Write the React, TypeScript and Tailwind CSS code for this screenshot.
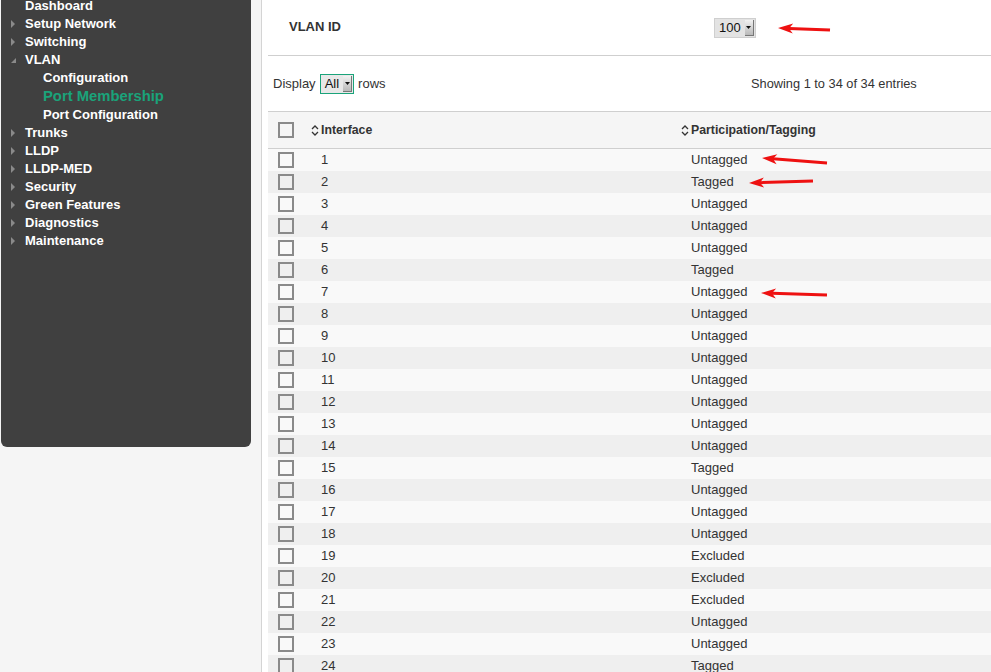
import React from 'react'

const menu = [
  { label: 'Dashboard', arrow: false },
  { label: 'Setup Network', arrow: true },
  { label: 'Switching', arrow: true },
  { label: 'VLAN', open: true },
]
const subMenu = ['Configuration', 'Port Membership', 'Port Configuration']
const menuRest = ['Trunks', 'LLDP', 'LLDP-MED', 'Security', 'Green Features', 'Diagnostics', 'Maintenance']

const tagging: Record<number, string> = { 2: 'Tagged', 6: 'Tagged', 15: 'Tagged', 19: 'Excluded', 20: 'Excluded', 21: 'Excluded', 24: 'Tagged' }
const rows = Array.from({ length: 34 }, (_, i) => ({ port: i + 1, mode: tagging[i + 1] ?? 'Untagged' }))

const arrows = [
  { tip: [778, 28], tail: [830, 30] },
  { tip: [762, 158], tail: [827, 163] },
  { tip: [749, 183], tail: [813, 181] },
  { tip: [761, 293], tail: [827, 295] },
]

function Triangle() {
  return (
    <svg width="6" height="8" viewBox="0 0 6 8" className="mr-[9px]">
      <path d="M1 0 L5 4 L1 8 Z" fill="#8a8a8a" />
    </svg>
  )
}

function SortIcon() {
  return (
    <svg width="8" height="11" viewBox="0 0 8 11" className="mr-[2px]">
      <path d="M1 4 L4 1 L7 4 M1 7 L4 10 L7 7" stroke="#333" strokeWidth="1.3" fill="none" />
    </svg>
  )
}

function Checkbox() {
  return <div className="w-[16px] h-[16px] border-2 border-[#8a8a8a] bg-transparent" />
}

function Select({ value, focus }: { value: string; focus?: boolean }) {
  return (
    <div
      className={`flex items-center h-[20px] pl-[4px] pr-[1px] ${
        focus ? 'border border-[#1aa37a] bg-[#e8e8e8]' : 'border border-[#cfcfcf] bg-[#e3e3e3]'
      }`}
    >
      <span className="text-[13px] text-[#111] mr-[4px]">{value}</span>
      <div className="w-[9px] h-[16px] bg-gradient-to-b from-[#f2f2f2] to-[#b9b9b9] border-r border-b border-[#777] flex items-center justify-center">
        <svg width="5" height="3" viewBox="0 0 5 3">
          <path d="M0 0 L5 0 L2.5 3 Z" fill="#111" />
        </svg>
      </div>
    </div>
  )
}

export default function App() {
  return (
    <div className="relative flex w-[991px] h-[672px] overflow-hidden bg-[#f5f5f5] font-['Liberation_Sans',Arial,sans-serif] text-[#333]">
      {/* Sidebar */}
      <div className="w-[261px] shrink-0 pl-[1px]">
        <div className="w-[250px] h-[447px] bg-[#404040] rounded-b-[6px] overflow-hidden">
          <div className="-mt-[3px] text-white font-bold text-[13px]">
            {menu.map((m) => (
              <div key={m.label} className="h-[18px] flex items-center pl-[9px]">
                {m.arrow ? (
                  <Triangle />
                ) : m.open ? (
                  <svg width="6" height="8" viewBox="0 0 6 8" className="mr-[9px]">
                    <path d="M6 2 L6 7 L1 7 Z" fill="#8a8a8a" />
                  </svg>
                ) : (
                  <span className="w-[15px]" />
                )}
                <span>{m.label}</span>
              </div>
            ))}
            {subMenu.map((s) =>
              s === 'Port Membership' ? (
                <div key={s} className="h-[19px] flex items-center pl-[42px] text-[14.8px] text-[#1aa37a]">
                  {s}
                </div>
              ) : (
                <div key={s} className="h-[18px] flex items-center pl-[42px]">
                  {s}
                </div>
              )
            )}
            {menuRest.map((m) => (
              <div key={m} className="h-[18px] flex items-center pl-[9px]">
                <Triangle />
                <span>{m}</span>
              </div>
            ))}
          </div>
        </div>
      </div>

      {/* Main */}
      <div className="flex-1 border-l border-[#d4d4d4] bg-white pl-[6px] text-[13px]">
        <div className="h-[56px] border-b border-[#cfcfcf] flex items-center">
          <div className="w-[446px] pl-[21px] -mt-[2px] font-bold text-[#333]">VLAN ID</div>
          <Select value="100" />
        </div>
        <div className="h-[56px] border-b border-[#cfcfcf] flex items-center">
          <div className="flex items-center pl-[5px] w-[483px]">
            <span className="mr-[4px]">Display</span>
            <Select value="All" focus />
            <span className="ml-[4px]">rows</span>
          </div>
          <span className="text-[12.8px]">Showing 1 to 34 of 34 entries</span>
        </div>
        <div className="grid grid-cols-[37px_370px_1fr] h-[37px] bg-[#f5f5f5] border-b border-[#cfcfcf] items-center font-bold text-[12.3px]">
          <div className="pl-[10px]">
            <Checkbox />
          </div>
          <div className="flex items-center pl-[6px]">
            <SortIcon />
            <span>Interface</span>
          </div>
          <div className="flex items-center pl-[6px]">
            <SortIcon />
            <span>Participation/Tagging</span>
          </div>
        </div>
        {rows.map((r, i) => (
          <div
            key={r.port}
            className={`grid grid-cols-[37px_370px_1fr] h-[22px] items-center ${i % 2 === 0 ? 'bg-[#f9f9f9]' : 'bg-[#efefef]'}`}
          >
            <div className="pl-[10px]">
              <Checkbox />
            </div>
            <div className="pl-[16px]">{r.port}</div>
            <div className="pl-[16px]">{r.mode}</div>
          </div>
        ))}
      </div>

      {/* Annotation arrows */}
      <svg className="absolute inset-0 pointer-events-none" width="991" height="672">
        {arrows.map((a, i) => {
          const [tx, ty] = a.tip
          const [bx, by] = a.tail
          const ang = Math.atan2(by - ty, bx - tx)
          const len = 15
          const hw = 5
          const cx = tx + Math.cos(ang) * len
          const cy = ty + Math.sin(ang) * len
          const px = -Math.sin(ang) * hw
          const py = Math.cos(ang) * hw
          const ix = tx + Math.cos(ang) * (len - 4)
          const iy = ty + Math.sin(ang) * (len - 4)
          return (
            <g key={i}>
              <line x1={ix} y1={iy} x2={bx} y2={by} stroke="#ee1111" strokeWidth="3" />
              <path d={`M${tx} ${ty} L${cx + px} ${cy + py} L${ix} ${iy} L${cx - px} ${cy - py} Z`} fill="#ee1111" />
            </g>
          )
        })}
      </svg>
    </div>
  )
}
